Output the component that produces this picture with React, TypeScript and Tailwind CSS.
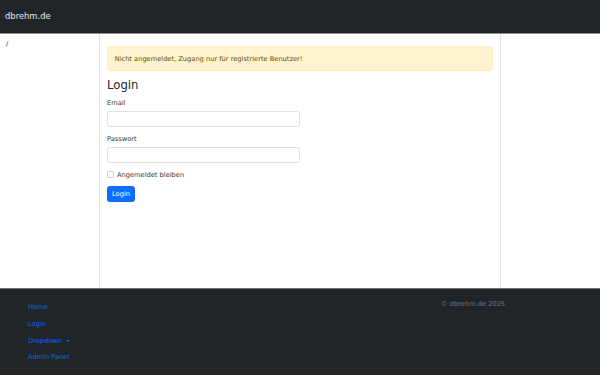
export default function App() {
  return (
    <div
      className="flex flex-col h-screen bg-white text-[#212529] text-[6.67px] leading-[1.5]"
      style={{ fontFamily: '"DejaVu Sans", sans-serif' }}
    >
      <header className="h-[34px] shrink-0 bg-[#212529] border-b border-[#8a8f94] flex items-center px-[5px]">
        <span className="text-[8.4px] text-white/90">dbrehm.de</span>
      </header>

      <main className="flex flex-1 min-h-0">
        <aside className="w-[100px] shrink-0 border-r border-[#e3e5e8] px-[6px] pt-[5px]">
          <span className="text-[#212529]">/</span>
        </aside>

        <section className="w-[401px] shrink-0 border-r border-[#e3e5e8] px-[7px] pt-[12px]">
          <div className="bg-[#fff3cd] border border-[#fff0c2] rounded-[2.5px] text-[#664d03] px-[6.67px] py-[6.67px] mb-[6px]">
            Nicht angemeldet, Zugang nur für registrierte Benutzer!
          </div>

          <h3 className="text-[11.67px] leading-[1.2] font-normal mb-[3.3px] pt-[1px]">Login</h3>

          <form className="w-[193px] pt-[2px]">
            <div className="mb-[6.67px]">
              <label className="block mb-[3.3px] text-[#33383d]">Email</label>
              <input
                type="email"
                className="block w-full h-[16px] border border-[#dee2e6] rounded-[2.5px] bg-white"
              />
            </div>
            <div className="mb-[6.67px]">
              <label className="block mb-[3.3px] text-[#33383d]">Passwort</label>
              <input
                type="password"
                className="block w-full h-[16px] border border-[#dee2e6] rounded-[2.5px] bg-white"
              />
            </div>
            <div className="flex items-center gap-[3px] mb-[6.67px] h-[10px]">
              <span className="w-[7px] h-[7px] border border-[#c4c8cc] rounded-[1.5px] bg-white" />
              <span className="text-[#33383d]">Angemeldet bleiben</span>
            </div>
            <button
              type="button"
              className="h-[16px] px-[4px] bg-[#0d6efd] text-white rounded-[2.5px] border border-[#0d6efd]"
            >
              Login
            </button>
          </form>
        </section>

        <aside className="flex-1" />
      </main>

      <footer className="h-[87px] shrink-0 bg-[#212529] border-t border-[#6c7075] grid grid-cols-[441px_1fr]">
        <nav className="flex flex-col pl-[28px] pt-[10px]">
          <a className="h-[16.7px] flex items-center text-[#1466e6]">Home</a>
          <a className="h-[16.7px] flex items-center text-[#1466e6]">Login</a>
          <a className="h-[16.7px] flex items-center text-[#1466e6]">
            Dropdown
            <span className="ml-[4px] w-0 h-0 border-l-[2px] border-r-[2px] border-t-[2px] border-l-transparent border-r-transparent border-t-[#1466e6]" />
          </a>
          <a className="h-[16.7px] flex items-center text-[#1466e6]">Admin Panel</a>
        </nav>
        <div className="pt-[10px] text-[#6c757d]">© dbrehm.de 2025</div>
      </footer>
    </div>
  );
}
